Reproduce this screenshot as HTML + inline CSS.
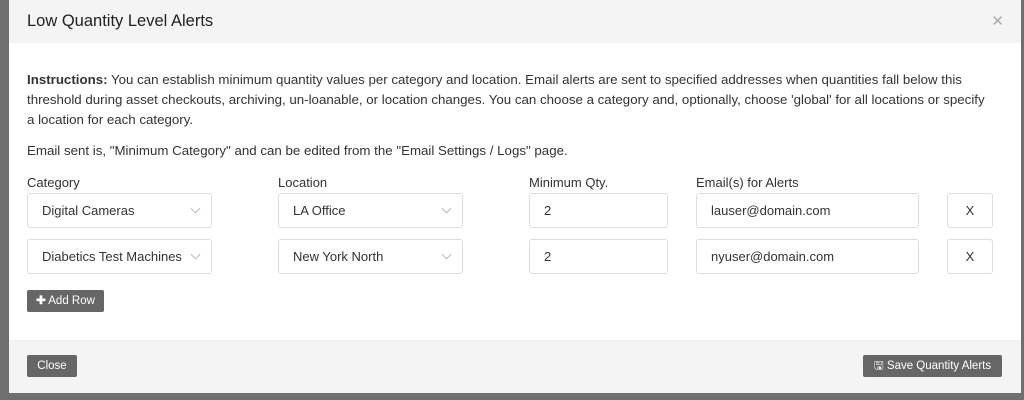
<!DOCTYPE html>
<html><head><style>
body{margin:0;width:1024px;height:400px;background:#6f6f6f;font-family:"Liberation Sans",sans-serif;position:relative;overflow:hidden;color:#333}
.modal{position:absolute;left:9px;top:0;width:1012px;height:393px;background:#fff}
.hdr{position:absolute;left:0;top:0;right:0;height:43px;background:#f4f4f4}
.hdr .t{position:absolute;left:18px;top:12px;font-size:16.5px;color:#222}
.hdr .x{position:absolute;right:17px;top:12px;font-size:15px;color:#aaa}
.p{position:absolute;left:18px;font-size:13.3px;line-height:20px;color:#333}
.lbl{position:absolute;top:175px;font-size:13px;color:#333}
.in{position:absolute;height:35px;border:1px solid #ddd;border-radius:3px;box-sizing:border-box;font-size:13px;line-height:33px;padding-left:14px;color:#333;background:#fff}
.in .c{position:absolute;right:12px;top:11px;width:6px;height:6px;border-right:1px solid #bbb;border-bottom:1px solid #bbb;transform:rotate(45deg)}
.xb{position:absolute;width:46px;height:35px;border:1px solid #ddd;border-radius:3px;box-sizing:border-box;text-align:center;line-height:33px;font-size:13px;color:#333}
.btn{position:absolute;background:#666;color:#fff;font-size:11.5px;line-height:22px;height:22px;text-align:center;border-radius:2px}
.ftr{position:absolute;left:0;right:0;top:340px;bottom:0;background:#f4f4f4;border-top:1px solid #eee}
</style></head><body>
<div class="modal">
<div class="hdr"><div class="t">Low Quantity Level Alerts</div><div class="x">✕</div></div>
<div class="p" style="top:70px;width:962px"><b>Instructions:</b> You can establish minimum quantity values per category and location. Email alerts are sent to specified addresses when quantities fall below this threshold during asset checkouts, archiving, un-loanable, or location changes. You can choose a category and, optionally, choose 'global' for all locations or specify a location for each category.</div>
<div class="p" style="top:141px">Email sent is, "Minimum Category" and can be edited from the "Email Settings / Logs" page.</div>
<div class="lbl" style="left:18px">Category</div>
<div class="lbl" style="left:269px">Location</div>
<div class="lbl" style="left:520px">Minimum Qty.</div>
<div class="lbl" style="left:687px">Email(s) for Alerts</div>
<div class="in" style="left:18px;top:193px;width:185px">Digital Cameras<span class="c"></span></div>
<div class="in" style="left:269px;top:193px;width:185px">LA Office<span class="c"></span></div>
<div class="in" style="left:520px;top:193px;width:139px">2</div>
<div class="in" style="left:687px;top:193px;width:223px">lauser@domain.com</div>
<div class="xb" style="left:938px;top:193px">X</div>
<div class="in" style="left:18px;top:239px;width:185px;overflow:hidden;white-space:nowrap;padding-right:28px">Diabetics Test Machines<span class="c"></span></div>
<div class="in" style="left:269px;top:239px;width:185px">New York North<span class="c"></span></div>
<div class="in" style="left:520px;top:239px;width:139px">2</div>
<div class="in" style="left:687px;top:239px;width:223px">nyuser@domain.com</div>
<div class="xb" style="left:938px;top:239px">X</div>
<div class="btn" style="left:18px;top:290px;width:77px"><b>✚</b> Add Row</div>
<div class="ftr"></div>
<div class="btn" style="left:18px;top:355px;width:50px">Close</div>
<div class="btn" style="left:854px;top:355px;width:139px">🖫 Save Quantity Alerts</div>
</div>
</body></html>
